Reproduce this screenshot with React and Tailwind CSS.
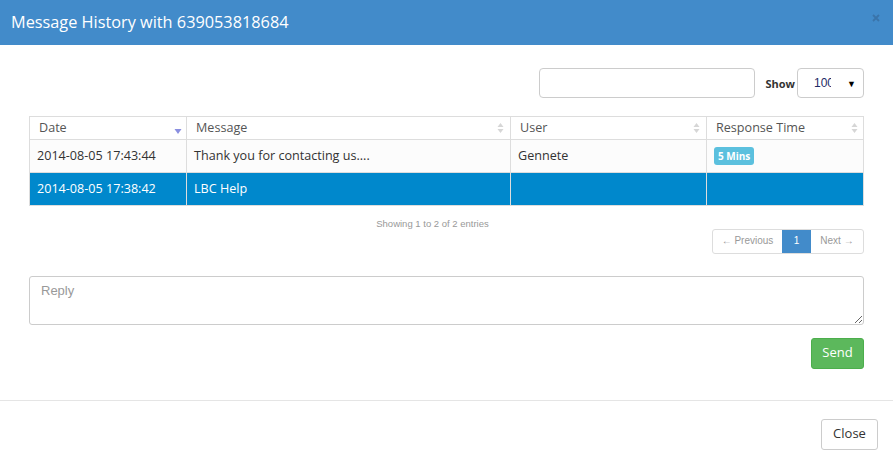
import React from "react";

const SortBoth = () => (
  <svg width="7" height="12" viewBox="0 0 7 12" className="shrink-0">
    <path d="M3.5 1 L6.5 5 L0.5 5 Z" fill="#d6d6d6" />
    <path d="M3.5 11 L6.5 7 L0.5 7 Z" fill="#d6d6d6" />
  </svg>
);

const SortDown = () => (
  <svg width="8" height="12" viewBox="0 0 8 12" className="shrink-0">
    <path d="M0.5 6 L7.5 6 L4 11 Z" fill="#8a8fe0" />
  </svg>
);

export default function App() {
  const font = { fontFamily: '"Open Sans", "Liberation Sans", sans-serif' };
  return (
    <div className="w-[893px] h-[464px] bg-white overflow-hidden" style={font}>
      <div className="h-[45px] bg-[#428bca] flex items-center justify-between pl-[11px] pr-[12px]">
        <div className="text-white text-[16.3px] leading-none">Message History with 639053818684</div>
        <svg width="8" height="8" viewBox="0 0 8 8" className="-mt-[10px] mr-[1px]">
          <path d="M1 1 L7 7 M7 1 L1 7" stroke="#3a74aa" strokeWidth="1.8" />
        </svg>
      </div>

      <div className="px-[29px] pt-[23px]">
        <div className="flex justify-end items-center h-[30px]">
          <div className="w-[216px] h-[30px] border border-[#cccccc] rounded-[4px]"></div>
          <div className="ml-[10px] text-[11px] font-bold text-[#333] leading-none">Show</div>
          <div className="ml-[2px] w-[67px] h-[30px] border border-[#cccccc] rounded-[4px] flex items-center pl-[16px] pr-[7px]">
            <div className="w-[17px] h-[14px] overflow-hidden whitespace-nowrap text-[12px] text-[#1e2a66] leading-[14px]" style={{ fontFamily: '"Liberation Sans", sans-serif' }}>100</div>
            <div className="ml-auto text-[9px] text-black leading-none">▼</div>
          </div>
        </div>

        <div className="mt-[18px] border border-[#dddddd] text-[12.6px] text-[#333]">
          <div className="grid grid-cols-[157px_324px_196px_1fr] h-[23px] border-b border-[#dddddd] bg-white text-[#555]">
            <div className="flex items-center justify-between pl-[9px] pr-[4px] border-r border-[#dddddd]">
              <span>Date</span>
              <span className="mt-[2px]"><SortDown /></span>
            </div>
            <div className="flex items-center justify-between pl-[9px] pr-[6px] border-r border-[#dddddd]">
              <span>Message</span>
              <SortBoth />
            </div>
            <div className="flex items-center justify-between pl-[9px] pr-[6px] border-r border-[#dddddd]">
              <span>User</span>
              <SortBoth />
            </div>
            <div className="flex items-center justify-between pl-[9px] pr-[5px]">
              <span>Response Time</span>
              <SortBoth />
            </div>
          </div>
          <div className="grid grid-cols-[157px_324px_196px_1fr] h-[33px] border-b border-[#dddddd] bg-[#fcfcfc]">
            <div className="flex items-center pl-[7px] border-r border-[#dddddd]">2014-08-05 17:43:44</div>
            <div className="flex items-center pl-[7px] border-r border-[#dddddd]">Thank you for contacting us....</div>
            <div className="flex items-center pl-[7px] border-r border-[#dddddd]">Gennete</div>
            <div className="flex items-center pl-[7px]">
              <span className="bg-[#5bc0de] text-white text-[10px] font-bold rounded-[3px] px-[4px] h-[18px] flex items-center leading-none">5 Mins</span>
            </div>
          </div>
          <div className="grid grid-cols-[157px_324px_196px_1fr] h-[32px] bg-[#0088cc] text-white">
            <div className="flex items-center pl-[7px] border-r border-[#dddddd]">2014-08-05 17:38:42</div>
            <div className="flex items-center pl-[7px] border-r border-[#dddddd]">LBC Help</div>
            <div className="flex items-center pl-[7px] border-r border-[#dddddd]"></div>
            <div className="flex items-center pl-[7px]"></div>
          </div>
        </div>

        <div className="text-center pr-[28px] text-[9.5px] text-[#999] mt-[13px] leading-none" style={{ fontFamily: '"Liberation Sans", sans-serif' }}>
          Showing 1 to 2 of 2 entries
        </div>

        <div className="flex justify-end mt-0">
          <div className="flex h-[25px] border border-[#dddddd] rounded-[3px] overflow-hidden text-[10px] text-[#999] leading-none" style={{ fontFamily: '"Liberation Sans", sans-serif' }}>
            <div className="w-[69px] flex items-center justify-center">← Previous</div>
            <div className="w-[29px] flex items-center justify-center bg-[#428bca] text-white">1</div>
            <div className="w-[52px] flex items-center justify-center">Next →</div>
          </div>
        </div>

        <textarea
          className="block mt-[22px] w-full h-[49px] border border-[#cccccc] rounded-[3px] px-[11px] py-[4px] text-[13px] text-[#555] placeholder:text-[#999] outline-none"
          placeholder="Reply"
          style={{ fontFamily: '"Liberation Sans", sans-serif' }}
        ></textarea>

        <div className="flex justify-end mt-[13px]">
          <div className="w-[53px] h-[31px] bg-[#5cb85c] border border-[#4cae4c] rounded-[3px] text-white text-[13px] flex items-center justify-center">Send</div>
        </div>
      </div>

      <div className="mt-[31px] border-t border-[#e5e5e5]"></div>

      <div className="flex justify-end pr-[15px] pt-[18px]">
        <div className="w-[57px] h-[31px] bg-white border border-[#cccccc] rounded-[3px] text-[#333] text-[13px] flex items-center justify-center">Close</div>
      </div>
    </div>
  );
}
